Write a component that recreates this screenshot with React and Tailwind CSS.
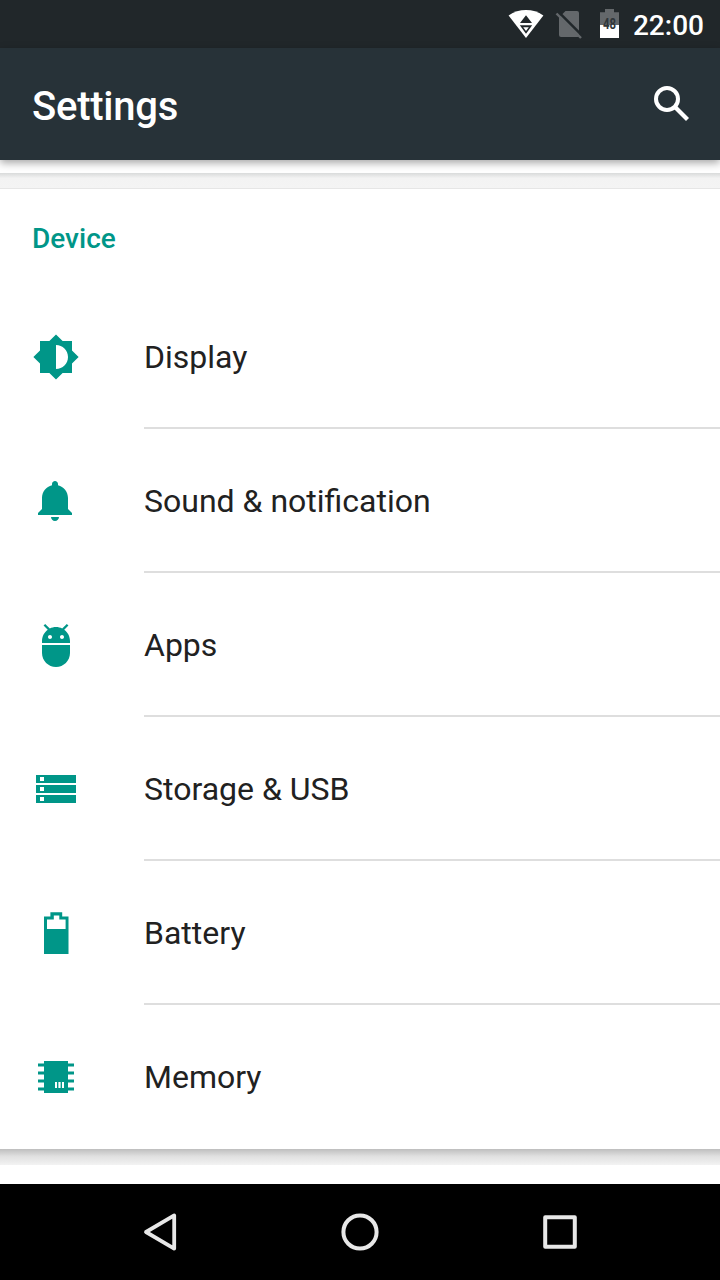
const TEAL = "#009688";

function DisplayIcon() {
  return (
    <svg className="size-12" viewBox="0 0 24 24" fill={TEAL}>
      <path d="M20 15.31L23.31 12 20 8.69V4h-4.69L12 .69 8.69 4H4v4.69L.69 12 4 15.31V20h4.69L12 23.31 15.31 20H20v-4.69zM12 18V6c3.31 0 6 2.69 6 6s-2.69 6-6 6z" />
    </svg>
  );
}

function BellIcon() {
  return (
    <svg className="size-12" viewBox="0 0 24 24" fill={TEAL}>
      <path d="M11.5 22c1.1 0 2-.9 2-2h-4c0 1.1.9 2 2 2zm6.5-6v-5.5c0-3.07-2.13-5.64-5-6.32V3.5c0-.83-.67-1.5-1.5-1.5S10 2.67 10 3.5v.68c-2.87.68-5 3.25-5 6.32V16l-2 2v1h17v-1l-2-2z" />
    </svg>
  );
}

function AppsIcon() {
  return (
    <svg className="size-12" viewBox="0 0 24 24" fill={TEAL}>
      <path d="M5 16c0 3.87 3.13 7 7 7s7-3.13 7-7v-4H5v4zM16.12 4.37l2.1-2.1-.82-.83-2.3 2.31C14.16 3.28 13.12 3 12 3s-2.16.28-3.09.75L6.6 1.44l-.82.83 2.1 2.1C6.14 5.64 5 7.68 5 10v1h14v-1c0-2.32-1.14-4.36-2.88-5.63zM9 9c-.55 0-1-.45-1-1s.45-1 1-1 1 .45 1 1-.45 1-1 1zm6 0c-.55 0-1-.45-1-1s.45-1 1-1 1 .45 1 1-.45 1-1 1z" />
    </svg>
  );
}

function StorageIcon() {
  return (
    <svg className="size-12" viewBox="0 0 48 48" fill={TEAL} fillRule="evenodd">
      <path d="M4 10h40v8H4zM8 12v4h4v-4zM4 20h40v8H4zM8 22v4h4v-4zM4 30h40v8H4zM8 32v4h4v-4z" />
    </svg>
  );
}

function BatteryIcon() {
  return (
    <svg className="size-12" viewBox="0 0 48 48" fill={TEAL} fillRule="evenodd">
      <path d="M18.4 3.2h11.8v4.2h6.3V45H12V7.4h6.4zM21.8 6.5v3.9H15v9.6h18.6v-9.6h-6.3V6.5z" />
    </svg>
  );
}

function MemoryIcon() {
  return (
    <svg className="size-12" viewBox="0 0 48 48" fill={TEAL}>
      <path d="M12 8h24v32H12zM6 10.5h36v3H6zM6 18.5h36v3H6zM6 26.5h36v3H6zM6 34.5h36v3H6z" />
      <path fill="#fff" d="M23 29h2v6h-2zM26.4 29h2.2v6h-2.2zM30 29h2v6h-2z" />
    </svg>
  );
}

const items = [
  { label: "Display", Icon: DisplayIcon },
  { label: "Sound & notification", Icon: BellIcon },
  { label: "Apps", Icon: AppsIcon },
  { label: "Storage & USB", Icon: StorageIcon },
  { label: "Battery", Icon: BatteryIcon },
  { label: "Memory", Icon: MemoryIcon },
];

function StatusBar() {
  return (
    <div className="flex h-12 shrink-0 items-center justify-end bg-[#21272a] pr-4">
      <svg className="h-12 w-[125px]" viewBox="508 0 125 48">
        <path fill="#fff" d="M526 38 508.6 15.5C519 8.2 533 8.2 543.4 15.5z" />
        <path fill="#21272a" d="M526 15.3 532 22.9H520zM519.8 25.2h12.400L526 33.8z" />
        <path fill="#fff" d="M523.2 27.2h5.6L526 31z" />
        <path fill="#64686b" d="M559 17.5 565.5 11H577a2 2 0 0 1 2 2V35.5a1.5 1.5 0 0 1-1.500 1.500H561a2 2 0 0 1-2-2z" />
        <path stroke="#21272a" strokeWidth="2.500" d="M558 11.500 583 36.500" />
        <path stroke="#64686b" strokeWidth="2.400" d="M556.500 13.500 581 38" />
        <path fill="#64686b" d="M605 9h9v3.200h5V25h-19V12.200h5z" />
        <path fill="#fff" d="M600 25h19v13h-19z" />
        <text
          x="609.5"
          y="29"
          textAnchor="middle"
          fill="#30363a"
          className="font-[Roboto,sans-serif] text-[15px] font-bold"
          textLength="13"
          lengthAdjust="spacingAndGlyphs"
        >
          48
        </text>
      </svg>
      <span className="pt-[3px] text-[28px] leading-none font-medium text-white">22:00</span>
    </div>
  );
}

function AppBar() {
  return (
    <header className="relative z-10 flex h-28 shrink-0 items-center justify-between bg-[#273238] pr-6 pl-8 shadow-[0_3px_8px_rgba(0,0,0,0.35)]">
      <h1 className="pt-1.5 text-[40px] leading-[48px] font-medium tracking-[-0.25px] text-white">Settings</h1>
      <svg className="size-12" viewBox="648 80 48 48" fill="none" stroke="#fff">
        <circle cx="667" cy="99" r="11" strokeWidth="4" />
        <path strokeWidth="4.300" d="M675.500 107.500 687.500 119.500" />
      </svg>
    </header>
  );
}

function NavBar() {
  return (
    <nav className="flex h-24 shrink-0 items-center justify-center gap-[152px] bg-black">
      <svg className="size-12" viewBox="136 1208 48 48" fill="none" stroke="#e8e8e8" strokeWidth="3.800" strokeLinejoin="round">
        <path d="M174.200 1215.400V1248.600L146 1232z" />
      </svg>
      <svg className="size-12" viewBox="336 1208 48 48" fill="none" stroke="#e8e8e8" strokeWidth="4">
        <circle cx="360" cy="1232" r="16.600" />
      </svg>
      <svg className="size-12" viewBox="536 1208 48 48" fill="none" stroke="#e8e8e8" strokeWidth="4" strokeLinejoin="round">
        <path d="M545.200 1217.200h29.600v29.600h-29.600z" />
      </svg>
    </nav>
  );
}

export default function App() {
  return (
    <div className="flex h-[1280px] w-[720px] flex-col overflow-hidden bg-[#f5f5f5] font-[Roboto,sans-serif]">
      <StatusBar />
      <AppBar />
      <main className="flex min-h-0 flex-1 flex-col">
        <div className="h-[13px] shrink-0 bg-white" />
        <div className="h-4 shrink-0 border-b border-[#e6e6e6] bg-linear-to-b from-[#d9dbdb] via-[#f3f3f3] via-35% to-[#f4f4f4]" />
        <section className="shrink-0 bg-white">
          <h2 className="flex h-24 items-center px-8 pt-1 text-[28px] leading-8 font-medium text-[#009688]">
            Device
          </h2>
          <ul>
            {items.map(({ label, Icon }) => (
              <li key={label} className="group flex h-36 items-center">
                <div className="w-36 pl-8">
                  <Icon />
                </div>
                <div className="flex h-full flex-1 items-center border-b-2 border-[#dedede] pt-0.5 text-[32px] text-[#212121] group-last:border-transparent">
                  {label}
                </div>
              </li>
            ))}
          </ul>
        </section>
        <div className="h-4 shrink-0 bg-linear-to-b from-[#bebebe] via-[#e0e0e0] via-45% to-[#f3f3f3]" />
        <div className="flex-1 bg-white" />
      </main>
      <NavBar />
    </div>
  );
}
